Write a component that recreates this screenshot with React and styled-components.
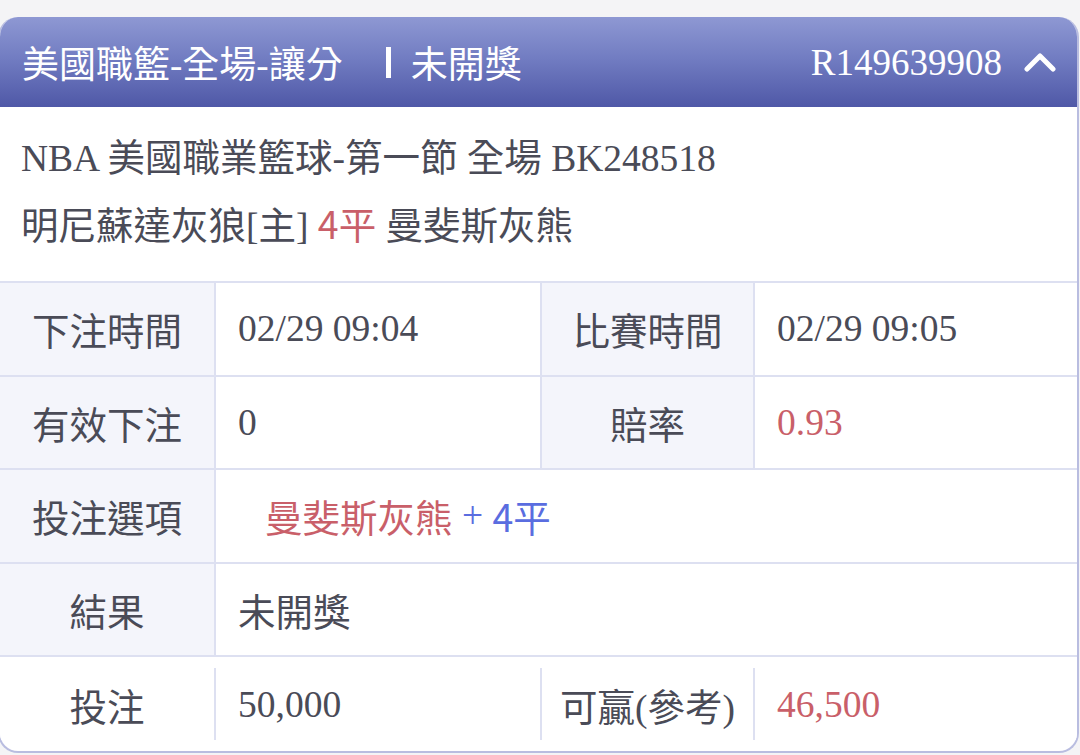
import React from "react";
import styled, { createGlobalStyle } from "styled-components";

const Global = createGlobalStyle`
  html, body { margin: 0; padding: 0; background: #f4f4f6; }
  body {
    font-family: "Liberation Serif", "Noto Sans CJK TC", serif;
    color: #4a4b57;
  }
  * { box-sizing: border-box; }
`;

const Page = styled.div`
  padding-top: 17px;
  width: 1080px;
  height: 755px;
  overflow: hidden;
`;

const Card = styled.div`
  margin: 0 1px 0 -2px;
  border: 2px solid #b9bde0;
  border-top: none;
  border-radius: 20px;
  overflow: hidden;
  background: #fff;
`;

const Header = styled.div`
  height: 90px;
  display: flex;
  align-items: center;
  justify-content: space-between;
  padding: 0 21px 0 22px;
  background: linear-gradient(to bottom, #8e98d3 0%, #727dc2 45%, #4f58a7 100%);
  color: #fff;
  font-size: 37px;
`;

const HeaderLeft = styled.div`
  display: flex;
  align-items: center;
`;

const Sep = styled.span`
  display: inline-block;
  width: 5px;
  height: 31px;
  background: #fff;
  margin: 0 20px 0 43px;
`;

const HeaderRight = styled.div`
  display: flex;
  align-items: center;
  gap: 22px;
`;

const Info = styled.div`
  padding: 20px 22px 26px 21px;
  font-size: 37.5px;
`;

const Line = styled.div`
  height: 64px;
  line-height: 64px;
  white-space: nowrap;
`;

const Red = styled.span`
  color: #c95f69;
  font-family: ${(p) => (p.$sans ? '"Noto Sans CJK TC", sans-serif' : "inherit")};
`;

const Blue = styled.span`
  color: #5a6de0;
  font-family: ${(p) => (p.$sans ? '"Noto Sans CJK TC", sans-serif' : "inherit")};
`;

const Table = styled.div`
  display: grid;
  grid-template-columns: 214px 326px 213px 1fr;
  border-top: 2px solid #dde0f1;
  font-size: 37.5px;
`;

const Cell = styled.div`
  height: ${(p) => (p.$plain ? "72px" : "93.5px")};
  margin: ${(p) => (p.$plain ? "11px 0" : "0")};
  display: flex;
  align-items: center;
  justify-content: ${(p) => (p.$label ? "center" : "flex-start")};
  padding-left: ${(p) => (p.$label ? "0" : p.$indent ? "49px" : "22px")};
  background: ${(p) => (p.$label && !p.$plain ? "#f4f5fb" : "#fff")};
  border-left: ${(p) => (p.$first ? "none" : "2px solid #dde0f1")};
  border-bottom: ${(p) => (p.$plain ? "none" : "2px solid #dde0f1")};
  grid-column: ${(p) => (p.$span ? `span ${p.$span}` : "auto")};
  white-space: nowrap;
`;

const Chevron = () => (
  <svg width="32" height="20" viewBox="0 0 32 20" fill="none">
    <path d="M3 17 L16 4 L29 17" stroke="#fff" strokeWidth="5" strokeLinecap="round" strokeLinejoin="round" />
  </svg>
);

export default function App() {
  return (
    <>
      <Global />
      <Page>
        <Card>
          <Header>
            <HeaderLeft>
              <span>美國職籃-全場-讓分</span>
              <Sep />
              <span>未開獎</span>
            </HeaderLeft>
            <HeaderRight>
              <span>R149639908</span>
              <Chevron />
            </HeaderRight>
          </Header>
          <Info>
            <Line>NBA 美國職業籃球-第一節 全場 BK248518</Line>
            <Line>
              明尼蘇達灰狼[主] <Red $sans>4平</Red> 曼斐斯灰熊
            </Line>
          </Info>
          <Table>
            <Cell $label $first>下注時間</Cell>
            <Cell>02/29 09:04</Cell>
            <Cell $label>比賽時間</Cell>
            <Cell>02/29 09:05</Cell>

            <Cell $label $first>有效下注</Cell>
            <Cell>0</Cell>
            <Cell $label>賠率</Cell>
            <Cell><Red>0.93</Red></Cell>

            <Cell $label $first>投注選項</Cell>
            <Cell $span={3} $indent>
              <Red>曼斐斯灰熊</Red>
              <Blue>&nbsp;+&nbsp;</Blue>
              <Blue $sans>4平</Blue>
            </Cell>

            <Cell $label $first>結果</Cell>
            <Cell $span={3}>未開獎</Cell>

            <Cell $label $first $plain>投注</Cell>
            <Cell $plain>50,000</Cell>
            <Cell $label $plain>可贏(參考)</Cell>
            <Cell $plain><Red>46,500</Red></Cell>
          </Table>
        </Card>
      </Page>
    </>
  );
}
